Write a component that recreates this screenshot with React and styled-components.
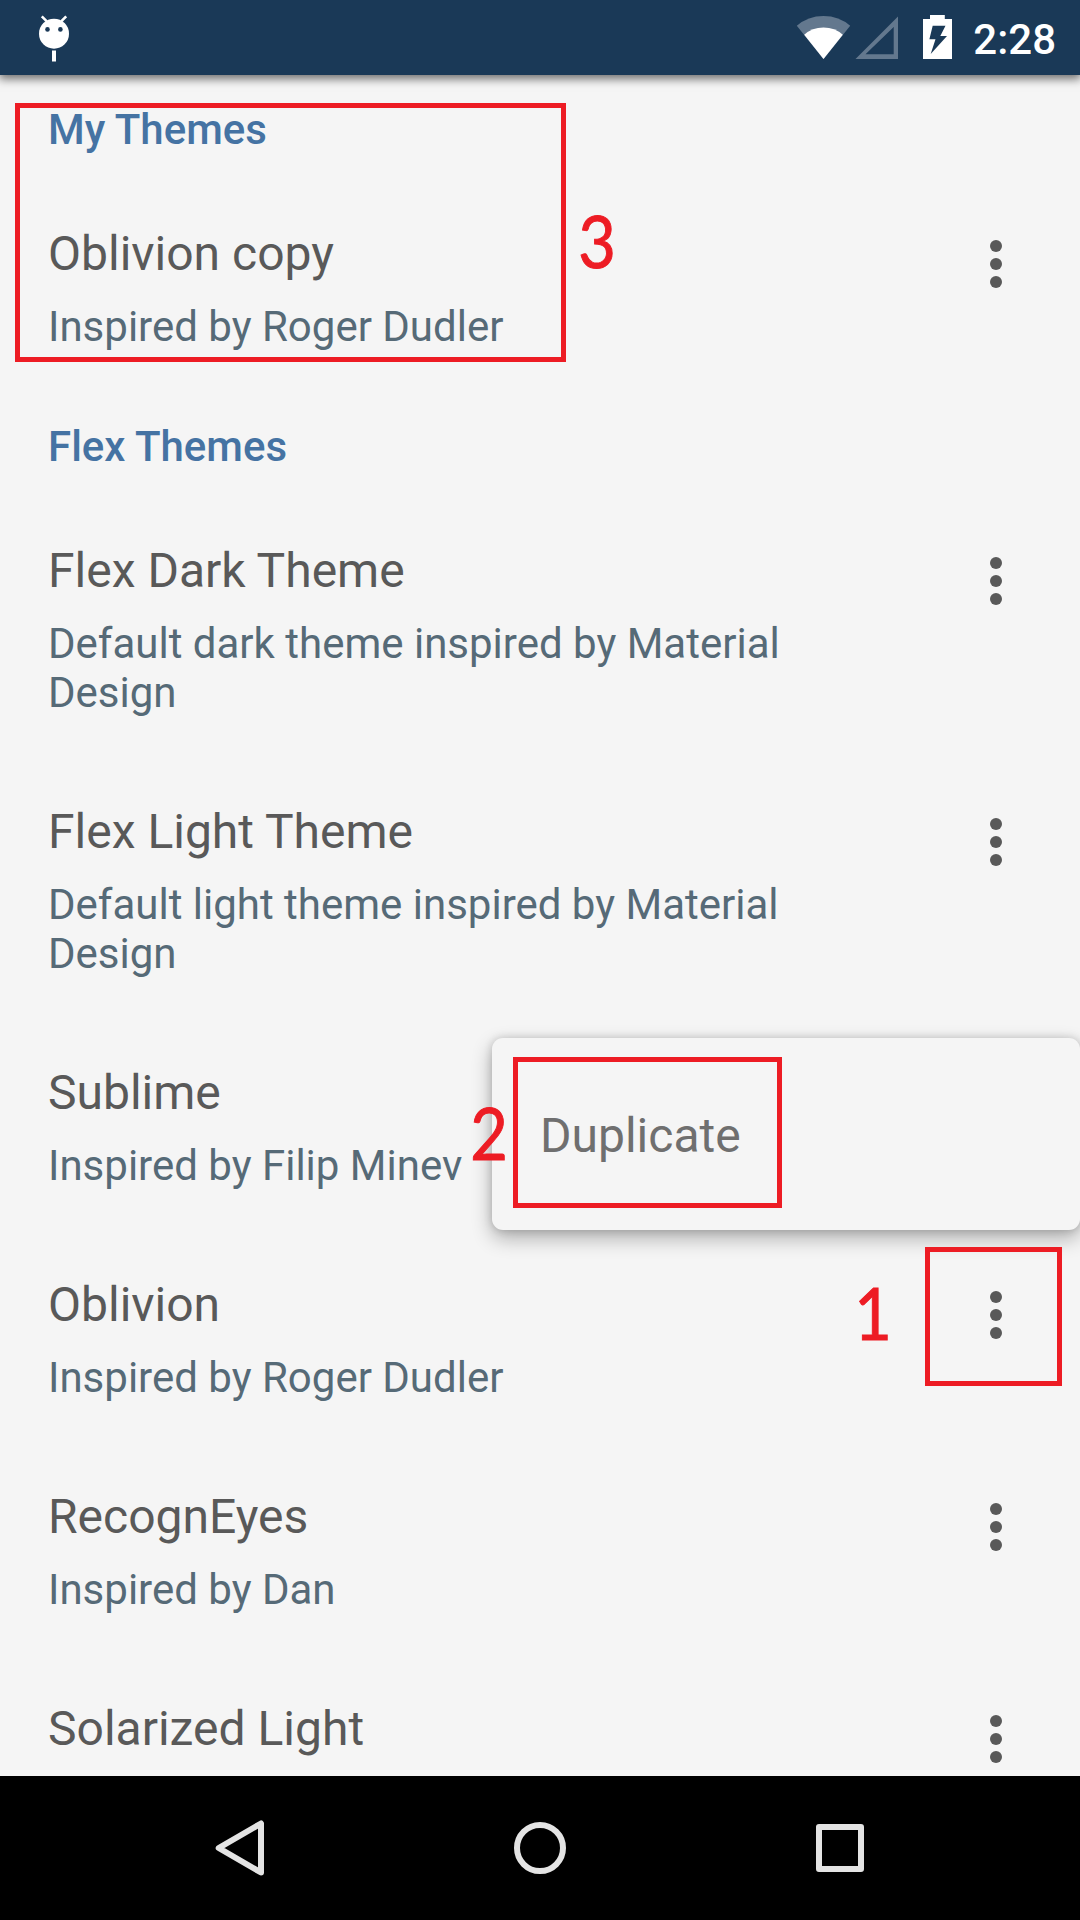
import React from "react";
import styled, { createGlobalStyle } from "styled-components";

const GlobalStyle = createGlobalStyle`
  * { box-sizing: border-box; }
  body { margin: 0; background: #f5f5f5; font-family: Roboto, "Noto Sans", sans-serif; }
`;

const Screen = styled.div`
  position: relative;
  display: flex;
  flex-direction: column;
  width: 1080px;
  height: 1920px;
  overflow: hidden;
  background: #f5f5f5;
`;

const StatusBar = styled.header`
  position: relative;
  z-index: 1;
  flex: 0 0 75px;
  display: flex;
  align-items: center;
  justify-content: space-between;
  padding: 0 24px 0 36px;
  background: #1a3957;
  box-shadow: 0 3px 9px 1px rgba(0, 0, 0, 0.55);
`;

const StatusIcons = styled.div`
  display: flex;
  align-items: center;
`;

const Clock = styled.time`
  margin-left: 19px;
  padding-top: 4px;
  color: #fff;
  font-size: 42px;
  font-weight: 500;
  line-height: 50px;
`;

const Icon = styled.svg`
  display: block;
  flex: none;
`;

const ThemeList = styled.main`
  flex: 1 1 0;
  min-height: 0;
  overflow: hidden;
  padding-top: 2px;
`;

const SectionTitle = styled.h2`
  margin: 0;
  padding: 28px 48px;
  color: #4573a3;
  font-size: 42px;
  font-weight: 500;
  line-height: 49px;
`;

const Row = styled.article`
  display: flex;
  justify-content: space-between;
  align-items: flex-start;
  padding: 44px 66px 43px 48px;
`;

const RowText = styled.div`
  display: flex;
  flex-direction: column;
  gap: 20px;
  width: 800px;
`;

const ThemeName = styled.h3`
  margin: 0;
  color: #595959;
  font-size: 48px;
  font-weight: 400;
  line-height: 56px;
`;

const ThemeNote = styled.p`
  margin: 0;
  color: #566a77;
  font-size: 42px;
  line-height: 49px;
`;

const MoreButton = styled.button`
  display: flex;
  flex-direction: column;
  align-items: center;
  gap: 6px;
  width: 36px;
  margin-top: 14px;
  padding: 0;
  border: 0;
  background: none;
`;

const Dot = styled.span`
  width: 12px;
  height: 12px;
  border-radius: 50%;
  background: #595959;
`;

const Popup = styled.div`
  position: absolute;
  left: 492px;
  top: 1038px;
  width: 588px;
  height: 192px;
  display: flex;
  align-items: center;
  padding: 4px 48px 0;
  border-radius: 11px;
  background: #f5f5f5;
  box-shadow: 0 8px 20px rgba(0, 0, 0, 0.3), 0 0 8px rgba(0, 0, 0, 0.16);
`;

const PopupItem = styled.span`
  color: #6f6f6f;
  font-size: 48px;
  line-height: 56px;
`;

const NavBar = styled.nav`
  flex: 0 0 144px;
  display: flex;
  justify-content: center;
  background: #000;
`;

const NavButton = styled.button`
  display: flex;
  align-items: center;
  justify-content: center;
  width: 300px;
  padding: 0;
  border: 0;
  background: none;
`;

const Frame = styled.div`
  position: absolute;
  left: ${(p) => p.$x}px;
  top: ${(p) => p.$y}px;
  width: ${(p) => p.$w}px;
  height: ${(p) => p.$h}px;
  border: 5px solid #ed1c24;
`;

const StepNumber = styled.span`
  position: absolute;
  left: ${(p) => p.$x}px;
  top: ${(p) => p.$y}px;
  width: 42px;
  color: #ed1c24;
  font-family: Lato, sans-serif;
  font-size: 72px;
  line-height: 88px;
  text-align: center;
  -webkit-text-stroke: 1px #ed1c24;
  transform: scaleX(0.9);
`;

const sections = [
  {
    title: "My Themes",
    themes: [{ name: "Oblivion copy", note: "Inspired by Roger Dudler" }],
  },
  {
    title: "Flex Themes",
    themes: [
      { name: "Flex Dark Theme", note: "Default dark theme inspired by Material Design" },
      { name: "Flex Light Theme", note: "Default light theme inspired by Material Design" },
      { name: "Sublime", note: "Inspired by Filip Minev" },
      { name: "Oblivion", note: "Inspired by Roger Dudler" },
      { name: "RecognEyes", note: "Inspired by Dan" },
      { name: "Solarized Light" },
    ],
  },
];

const steps = [
  { label: "3", x: 576, y: 196, frame: { x: 15, y: 103, w: 551, h: 259 } },
  { label: "2", x: 468, y: 1088, frame: { x: 513, y: 1057, w: 269, h: 151 } },
  { label: "1", x: 852, y: 1268, frame: { x: 925, y: 1247, w: 137, h: 139 } },
];

function DebugIcon() {
  return (
    <Icon width="36" height="75" viewBox="36 0 36 75">
      <path d="M41.8 16.4l5 5M66.2 16.4l-5 5" stroke="#fff" strokeWidth="2.6" />
      <circle cx="54" cy="33.7" r="15" fill="#fff" />
      <circle cx="47.5" cy="29.4" r="2.3" fill="#1a3957" />
      <circle cx="60.4" cy="29.4" r="2.3" fill="#1a3957" />
      <rect x="52" y="50.5" width="4" height="11" fill="#fff" />
    </Icon>
  );
}

function SignalIcons() {
  return (
    <Icon width="158" height="75" viewBox="796 0 158 75">
      <path d="M823.5 59L796.8 25.8Q808 16 823.5 16T850.2 25.8Z" fill="#63788e" />
      <path d="M823.5 59L804.2 34.8Q812 27.5 823.5 27.5T842.8 34.8Z" fill="#fff" />
      <path
        fillRule="evenodd"
        d="M855.5 59L898 16.5V59ZM865.5 54.3H893.7V27Z"
        fill="#63788e"
      />
      <path
        fillRule="evenodd"
        d="M930 15H944.8V19H952V59H923V19H930ZM932.7 25.7L929.4 39.3H935.5L930.7 54L947 36H940.3L945.5 25.7Z"
        fill="#fff"
      />
    </Icon>
  );
}

function ThemeRow({ name, note }) {
  return (
    <Row>
      <RowText>
        <ThemeName>{name}</ThemeName>
        {note && <ThemeNote>{note}</ThemeNote>}
      </RowText>
      <MoreButton aria-label="More options">
        <Dot />
        <Dot />
        <Dot />
      </MoreButton>
    </Row>
  );
}

export default function App() {
  return (
    <>
      <GlobalStyle />
      <Screen>
        <StatusBar>
          <DebugIcon />
          <StatusIcons>
            <SignalIcons />
            <Clock>2:28</Clock>
          </StatusIcons>
        </StatusBar>

        <ThemeList>
          {sections.map((section) => (
            <section key={section.title}>
              <SectionTitle>{section.title}</SectionTitle>
              {section.themes.map((theme) => (
                <ThemeRow key={theme.name} {...theme} />
              ))}
            </section>
          ))}
        </ThemeList>

        <NavBar>
          <NavButton aria-label="Back">
            <Icon width="60" height="60" viewBox="0 0 60 60">
              <path
                d="M51 5.5V54.5L8.7 30Z"
                fill="none"
                stroke="#e4e4e4"
                strokeWidth="6"
                strokeLinejoin="round"
              />
            </Icon>
          </NavButton>
          <NavButton aria-label="Home">
            <Icon width="60" height="60" viewBox="0 0 60 60">
              <circle cx="30" cy="30" r="23" fill="none" stroke="#e4e4e4" strokeWidth="6" />
            </Icon>
          </NavButton>
          <NavButton aria-label="Recent apps">
            <Icon width="60" height="60" viewBox="0 0 60 60">
              <path
                d="M9 9H51V51H9Z"
                fill="none"
                stroke="#e4e4e4"
                strokeWidth="6"
                strokeLinejoin="round"
              />
            </Icon>
          </NavButton>
        </NavBar>

        <Popup>
          <PopupItem>Duplicate</PopupItem>
        </Popup>

        {steps.map(({ label, x, y, frame }) => (
          <React.Fragment key={label}>
            <Frame $x={frame.x} $y={frame.y} $w={frame.w} $h={frame.h} />
            <StepNumber $x={x} $y={y}>
              {label}
            </StepNumber>
          </React.Fragment>
        ))}
      </Screen>
    </>
  );
}
